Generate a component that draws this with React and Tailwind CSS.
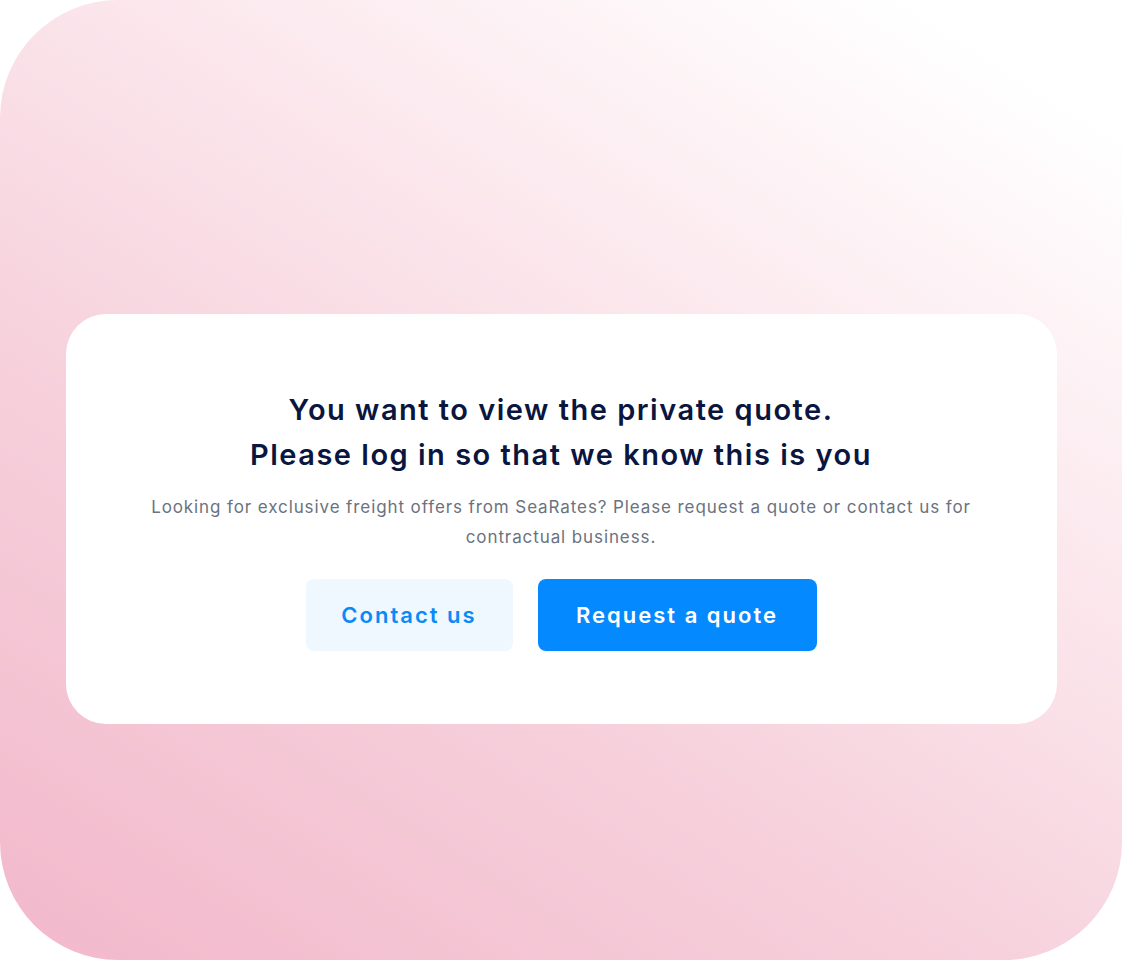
import React from 'react'

export default function App() {
  return (
    <div className="w-[1122px] h-[960px] bg-white">
      <div
        className="w-full h-full rounded-[118px] flex items-center justify-center pt-[78px]"
        style={{ backgroundImage: 'linear-gradient(32deg, #f2b8cb 0%, #f6cfdb 35%, #fbe6ec 62%, #ffffff 92%)' }}
      >
        <div className="w-[991px] h-[410px] bg-white rounded-[40px] flex flex-col items-center pt-[73px] font-['Inter',sans-serif]">
          <h1 className="text-[29px] leading-[45px] font-semibold text-[#0a1640] text-center tracking-[1.5px]">
            You want to view the private quote.
            <br />
            Please log in so that we know this is you
          </h1>
          <p className="mt-[15px] text-[17px] leading-[30px] text-[#6b7280] text-center w-[840px] tracking-[0.9px]">
            Looking for exclusive freight offers from SeaRates? Please request a quote or contact us for contractual business.
          </p>
          <div className="mt-[27px] flex gap-[25px]">
            <button className="w-[207px] h-[72px] rounded-[8px] bg-[#eff8ff] text-[#0a8af5] text-[22px] font-semibold tracking-[2px]">
              Contact us
            </button>
            <button className="w-[279px] h-[72px] rounded-[8px] bg-[#0589ff] text-white text-[22px] font-semibold tracking-[2px]">
              Request a quote
            </button>
          </div>
        </div>
      </div>
    </div>
  )
}
